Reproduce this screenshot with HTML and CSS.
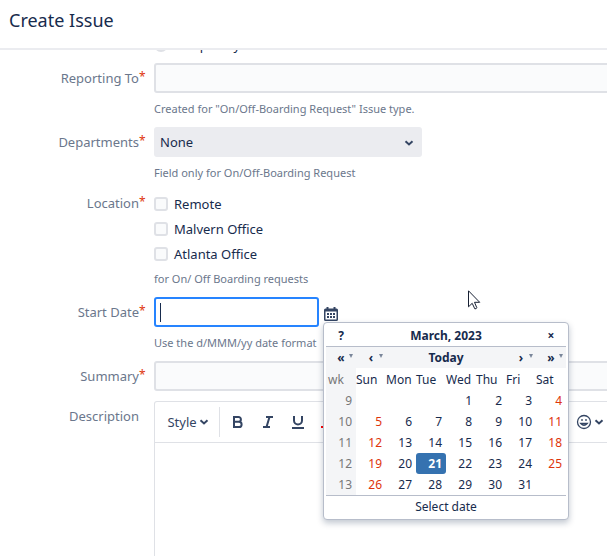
FILE: index.html
```html
<!DOCTYPE html>
<html lang="en">
<head>
<meta charset="utf-8">
<title>Create Issue</title>
<link rel="stylesheet" href="styles.css">
</head>
<body>
<div class="dialog">
  <header class="dialog-header"><h1>Create Issue</h1></header>
  <form class="dialog-body">
    <div class="fields">
      <div class="row row-scrolled">
        <span class="label"></span>
        <div class="control">
          <label class="option"><input class="radio" type="radio" name="contract"><span>Temporary</span></label>
        </div>
      </div>
      <div class="row">
        <label class="label" for="reporting">Reporting To<span class="req">*</span></label>
        <div class="control">
          <input class="text wide" id="reporting" type="text">
          <p class="help">Created for "On/Off-Boarding Request" Issue type.</p>
        </div>
      </div>
      <div class="row">
        <label class="label" for="departments">Departments<span class="req">*</span></label>
        <div class="control">
          <div class="select-wrap">
            <select class="select" id="departments"><option>None</option></select>
            <svg class="chevron select-chevron" viewBox="0 0 10 6"><path d="M1.5 1.2 5 4.4 8.500 1.2"/></svg>
          </div>
          <p class="help">Field only for On/Off-Boarding Request</p>
        </div>
      </div>
      <div class="row" role="group" aria-labelledby="location">
        <span class="label label-options" id="location">Location<span class="req">*</span></span>
        <div class="control">
          <label class="option"><input class="check" type="checkbox"><span>Remote</span></label>
          <label class="option"><input class="check" type="checkbox"><span>Malvern Office</span></label>
          <label class="option"><input class="check" type="checkbox"><span>Atlanta Office</span></label>
          <p class="help help-options">for On/ Off Boarding requests</p>
        </div>
      </div>
      <div class="row">
        <label class="label" for="start">Start Date<span class="req">*</span></label>
        <div class="control">
          <div class="date-line">
            <input class="text date" id="start" type="text">
            <span class="caret"></span>
            <button class="icon-button" type="button" aria-label="Select a date">
              <svg class="calendar-icon" viewBox="0 0 14 14"><path fill="#344563" fill-rule="evenodd" d="M2.500 0h2v1.500h5V0h2v1.500h1Q14 1.500 14 3v9.500q0 1.500-1.500 1.500h-11Q0 14 0 12.500V3q0-1.500 1.500-1.500h1zM1.500 4.500v8h11v-8z"/><path fill="#344563" d="M3 9h2v2H3zM6 9h2v2H6zM9 9h2v2H9zM6 6h2v2H6zM9 6h2v2H9zM3 6h2v2H3z"/></svg>
            </button>
            <div class="calendar">
              <table>
                <thead>
                  <tr class="cal-title"><th><button type="button">?</button></th><th colspan="6">March, 2023</th><th><button type="button">×</button></th></tr>
                  <tr class="cal-nav">
                    <td><button type="button">«</button><i class="more"></i></td>
                    <td><button type="button">‹</button><i class="more"></i></td>
                    <td colspan="4"><button type="button">Today</button></td>
                    <td><button type="button">›</button><i class="more"></i></td>
                    <td><button type="button">»</button><i class="more"></i></td>
                  </tr>
                  <tr class="cal-names"><th class="wk">wk</th><th>Sun</th><th>Mon</th><th>Tue</th><th>Wed</th><th>Thu</th><th>Fri</th><th>Sat</th></tr>
                </thead>
                <tbody>
                  <tr><td class="wk">9</td><td></td><td></td><td></td><td>1</td><td>2</td><td>3</td><td class="off">4</td></tr>
                  <tr><td class="wk">10</td><td class="off">5</td><td>6</td><td>7</td><td>8</td><td>9</td><td>10</td><td class="off">11</td></tr>
                  <tr><td class="wk">11</td><td class="off">12</td><td>13</td><td>14</td><td>15</td><td>16</td><td>17</td><td class="off">18</td></tr>
                  <tr><td class="wk">12</td><td class="off">19</td><td>20</td><td class="today">21</td><td>22</td><td>23</td><td>24</td><td class="off">25</td></tr>
                  <tr><td class="wk">13</td><td class="off">26</td><td>27</td><td>28</td><td>29</td><td>30</td><td>31</td><td></td></tr>
                </tbody>
                <tfoot><tr><td colspan="8">Select date</td></tr></tfoot>
              </table>
            </div>
          </div>
          <p class="help">Use the d/MMM/yy date format</p>
        </div>
      </div>
      <div class="row">
        <label class="label" for="summary">Summary<span class="req">*</span></label>
        <div class="control"><input class="text wide" id="summary" type="text"></div>
      </div>
      <div class="row row-editor">
        <label class="label" for="description">Description<span class="req"></span></label>
        <div class="control">
          <div class="editor wide">
            <div class="toolbar">
              <button class="tool tool-style" type="button">Style<svg class="chevron" viewBox="0 0 10 6"><path d="M1.500 1.200 5 4.400 8.500 1.200"/></svg></button>
              <button class="tool" type="button" aria-label="Bold"><svg class="glyph" viewBox="0 0 12 14"><path d="M2 2h4.500a2.400 2.400 0 0 1 0 4.800H2zM2 6.800h5a2.600 2.600 0 0 1 0 5.200H2z"/></svg></button>
              <button class="tool" type="button" aria-label="Italic"><svg class="glyph" viewBox="0 0 12 14"><path d="M4 2h7M1 12h7M7.500 2l-3 10"/></svg></button>
              <button class="tool" type="button" aria-label="Underline"><svg class="glyph" viewBox="0 0 12 14"><path d="M2 1v4.500a4 4 0 0 0 8 0V1M0 13h12"/></svg></button>
              <button class="tool" type="button" aria-label="Text color"><svg class="glyph" viewBox="0 0 12 14"><path d="m4 9 3-7 3 7"/><path class="ink" d="M-1 12h13"/></svg></button>
              <button class="tool tool-emoji" type="button" aria-label="Emoji"><svg class="emoji" viewBox="0 0 16 16"><circle cx="8" cy="8" r="6.500"/><path d="M6 5v2M10 5v2M4.800 9.500h6.400q-3.200 3.500-6.400 0z"/></svg><svg class="chevron" viewBox="0 0 10 6"><path d="M1.500 1.200 5 4.400 8.500 1.200"/></svg></button>
            </div>
            <textarea id="description"></textarea>
          </div>
        </div>
      </div>
    </div>
  </form>
  <svg class="pointer" viewBox="0 0 13 20"><path fill="#fff" stroke="#172033" d="M.5.8v16l3.700-3.500 2.600 5.500q1.700.3 2-1.100L6.500 12.300h5.200z"/></svg>
</div>
</body>
</html>
```

FILE: styles.css
```css
* { box-sizing: border-box; }

body {
  margin: 0;
  background: #fff;
  color: #172b4d;
  font: 13px/20px "Noto Sans", "Open Sans", sans-serif;
}

button, input, select, textarea { font: inherit; color: inherit; margin: 0; }
button { padding: 0; border: 0; background: none; }

.dialog {
  position: relative;
  display: flex;
  flex-direction: column;
  height: 100vh;
  overflow: hidden;
}

.dialog-header {
  flex: none;
  padding: 6px 9px 14px;
  border-bottom: 2px solid #ebecf0;
}

h1 { margin: 0; font-size: 18px; line-height: 28px; font-weight: 400; }

.dialog-body {
  flex: 1;
  display: flex;
  flex-direction: column;
  min-height: 0;
  overflow: hidden;
}

.fields {
  flex: 1;
  display: flex;
  flex-direction: column;
  gap: 10px;
  margin-top: -18px;
}

.row {
  display: grid;
  grid-template-columns: 145px minmax(0, 1fr);
  column-gap: 9px;
}
.row-scrolled { margin-bottom: -4px; }

.label { color: #6b778c; text-align: right; line-height: 30px; }
.label-options { line-height: 25px; }

.req {
  display: inline-block;
  width: 6px;
  color: #de350b;
  font-size: 12px;
  line-height: 12px;
  text-align: left;
  vertical-align: 2px;
}

.wide { width: calc(100% + 40px); }

.text {
  display: block;
  height: 30px;
  padding: 0 6px;
  border: 2px solid #dfe1e6;
  border-radius: 3px;
  background: #fafbfc;
  outline: none;
}

.date { width: 165px; border-color: #2684ff; background: #fff; }

.help {
  margin: 8px 0 0;
  color: #6b778c;
  font-size: 11px;
  line-height: 16px;
}
.help-options { margin-top: 5px; }

.select-wrap { position: relative; width: 268px; max-width: 100%; }

.select {
  appearance: none;
  display: block;
  width: 100%;
  height: 30px;
  padding: 0 6px;
  border: 0;
  border-radius: 3px;
  background: #ebecf0;
}

.chevron {
  width: 10px;
  height: 6px;
  fill: none;
  stroke: #344563;
  stroke-width: 2;
}
.select-chevron { position: absolute; right: 8px; top: 13px; }

.option { display: flex; align-items: center; gap: 6px; height: 25px; }

.check, .radio {
  appearance: none;
  width: 14px;
  height: 14px;
  border: 2px solid #dfe1e6;
  border-radius: 3px;
  background: #fafbfc;
}
.radio { border-radius: 50%; }

.date-line { position: relative; display: flex; gap: 5px; }

.caret {
  position: absolute;
  left: 6px;
  top: 6px;
  width: 1px;
  height: 19px;
  background: #172b4d;
}

.icon-button { align-self: center; height: 14px; margin-top: 4px; }
.calendar-icon { display: block; width: 14px; height: 14px; }

.calendar {
  position: absolute;
  z-index: 1;
  left: 169px;
  top: 25px;
  padding: 2px;
  border: 1px solid #b7bdca;
  border-radius: 4px;
  background: #fff;
  box-shadow: 0 3px 6px rgba(9, 30, 66, .25);
}

table {
  width: 240px;
  table-layout: fixed;
  border-collapse: separate;
  border-spacing: 0;
  font-size: 12px;
  line-height: 21px;
}

th, td { height: 21px; padding: 0; text-align: center; }
table button { font-weight: 700; line-height: 21px; }
.cal-title th { border-bottom: 1px solid #b7bdca; }
.cal-nav td { position: relative; background: #f4f5f7; }

.more {
  position: absolute;
  right: 3px;
  top: 7px;
  border: 2px solid transparent;
  border-top: 4px solid #7a869a;
  border-bottom: 0;
}

.cal-names th { height: 22px; padding-top: 1px; font-weight: 400; text-align: left; }
tbody td { padding-right: 4px; text-align: right; }
.wk, .cal-names .wk { background: #f4f5f7; color: #777; }
.cal-names .wk { padding-left: 2px; }
.off { color: #de350b; }
.today { border-radius: 3px; background: #3572b0; color: #fff; font-weight: 700; }
tfoot td { height: 22px; border-top: 1px solid #b7bdca; }

.row-editor { flex: 1; }
.row-editor .control { display: flex; }

.editor {
  flex: none;
  display: flex;
  flex-direction: column;
  border: 1px solid #dfe1e6;
  border-bottom: 0;
  border-radius: 3px 3px 0 0;
}

.toolbar {
  display: flex;
  align-items: center;
  height: 41px;
  padding-right: 41px;
  border-bottom: 1px solid #dfe1e6;
}

.tool {
  display: flex;
  align-items: center;
  justify-content: center;
  width: 30px;
  height: 30px;
  color: #344563;
}
.tool-style {
  gap: 2px;
  width: 65px;
  margin-right: 3px;
  padding-left: 2px;
  border-right: 1px solid #dfe1e6;
}
.tool-emoji { gap: 2px; margin-left: auto; }

.glyph { width: 12px; height: 14px; overflow: visible; fill: none; stroke: #344563; stroke-width: 2; }
.glyph .ink { stroke: #f00; }
.emoji { flex: none; width: 16px; height: 16px; fill: none; stroke: #344563; stroke-width: 1.3; }
.tool .chevron { flex: none; }

textarea { flex: 1; border: 0; outline: none; resize: none; }

.pointer {
  position: absolute;
  left: 468px;
  top: 290px;
  width: 13px;
  height: 20px;
}
```
